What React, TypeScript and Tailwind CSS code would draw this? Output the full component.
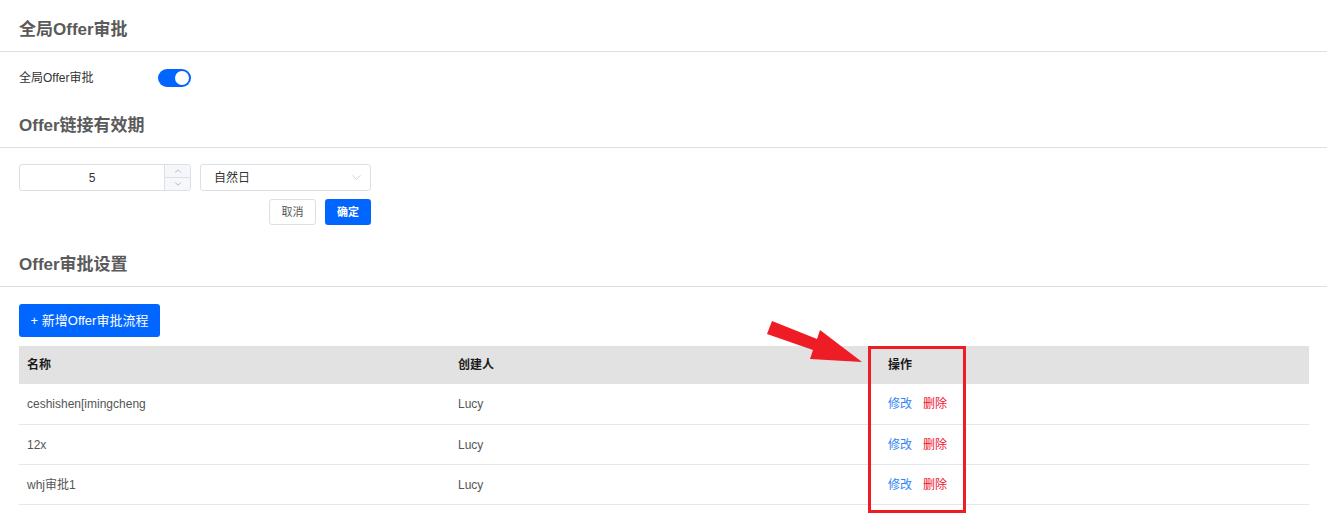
import { ChevronDown, ChevronUp } from 'lucide-react';

type Flow = { name: string; creator: string };

const flows: Flow[] = [
  { name: 'ceshishen[imingcheng', creator: 'Lucy' },
  { name: '12x', creator: 'Lucy' },
  { name: 'whj审批1', creator: 'Lucy' },
];

function SectionTitle({ children, top }: { children: React.ReactNode; top: string }) {
  return (
    <div className={`${top} border-b border-[#dcdfe6]`}>
      <h2 className="pl-[19px] pb-[10px] text-[17px] leading-[22px] font-bold text-[#5a5a5a]">{children}</h2>
    </div>
  );
}

function App() {
  return (
    <div
      className="relative w-[1327px] h-[516px] overflow-hidden bg-white text-[12px] text-[#333]"
      style={{ fontFamily: '"Liberation Sans", "Noto Sans CJK SC", sans-serif' }}
    >
      {/* Global approval switch */}
      <SectionTitle top="pt-[19px]">全局Offer审批</SectionTitle>
      <div className="flex items-center h-[18px] mt-[17px] pl-[19px]">
        <span className="w-[139px] text-[12px] text-[#333]">全局Offer审批</span>
        <button className="flex items-center justify-end w-[33px] h-[18px] rounded-full bg-[#0066ff] pr-[2px]">
          <span className="block w-[14px] h-[14px] rounded-full bg-white" />
        </button>
      </div>

      {/* Link validity */}
      <SectionTitle top="pt-[28px]">Offer链接有效期</SectionTitle>
      <div className="ml-[19px] mt-[16px] w-[352px]">
        <div className="flex gap-[9px]">
          <div className="flex w-[172px] h-[27px] border border-[#dcdfe6] rounded-[3px] overflow-hidden">
            <div className="flex-1 flex items-center justify-center text-[12px] text-[#333]">5</div>
            <div className="flex flex-col w-[26px] border-l border-[#dcdfe6] bg-[#f5f7fa]">
              <div className="flex-1 flex items-center justify-center border-b border-[#dcdfe6]">
                <ChevronUp size={10} strokeWidth={1.5} className="text-[#909399]" />
              </div>
              <div className="flex-1 flex items-center justify-center">
                <ChevronDown size={10} strokeWidth={1.5} className="text-[#909399]" />
              </div>
            </div>
          </div>
          <div className="flex items-center justify-between w-[171px] h-[27px] border border-[#dcdfe6] rounded-[3px] pl-[13px] pr-[6px]">
            <span className="text-[12px] text-[#333]">自然日</span>
            <ChevronDown size={15} strokeWidth={1.2} className="text-[#c0c4cc]" />
          </div>
        </div>
        <div className="flex justify-end gap-[9px] mt-[8px]">
          <button className="w-[47px] h-[26px] border border-[#dcdfe6] rounded-[3px] bg-white text-[11px] text-[#555]">取消</button>
          <button className="w-[46px] h-[26px] rounded-[3px] bg-[#0066ff] text-[11px] font-bold text-white">确定</button>
        </div>
      </div>

      {/* Approval flow list */}
      <SectionTitle top="pt-[29px]">Offer审批设置</SectionTitle>
      <div className="pl-[19px] pr-[18px] mt-[17px]">
        <button className="w-[141px] h-[33px] rounded-[3px] bg-[#0066ff] text-[13px] text-white">+ 新增Offer审批流程</button>
        <table className="mt-[9px] w-full table-fixed border-collapse text-[12px]">
          <thead>
            <tr className="h-[38px] bg-[#e2e2e2] text-left">
              <th className="w-[431px] pl-[8px] font-bold text-[#1a1a1a]">名称</th>
              <th className="w-[430px] pl-[8px] font-bold text-[#1a1a1a]">创建人</th>
              <th className="pl-[8px] font-bold text-[#1a1a1a]">操作</th>
            </tr>
          </thead>
          <tbody>
            {flows.map((f) => (
              <tr key={f.name} className="h-[40px] border-b border-[#e4e7ed]">
                <td className="pl-[8px] pt-[1px] text-[#555]">{f.name}</td>
                <td className="pl-[8px] pt-[1px] text-[#555]">{f.creator}</td>
                <td className="pl-[8px] pt-[1px]">
                  <span className="text-[#3385f5] mr-[11px] cursor-pointer">修改</span>
                  <span className="text-[#f0142d] cursor-pointer">删除</span>
                </td>
              </tr>
            ))}
          </tbody>
        </table>
      </div>

      {/* Red highlight around the actions column */}
      <div className="absolute left-[868px] top-[346px] w-[98px] h-[167px] border-[3px] border-[#ee1c25] pointer-events-none" />
      <svg className="absolute left-0 top-0 pointer-events-none" width="1327" height="516">
        <polygon
          points="772,321 767,334 813,350 810,359 862,362 820,330 817,339"
          fill="#ee1c25"
        />
      </svg>
    </div>
  );
}

export default App;
